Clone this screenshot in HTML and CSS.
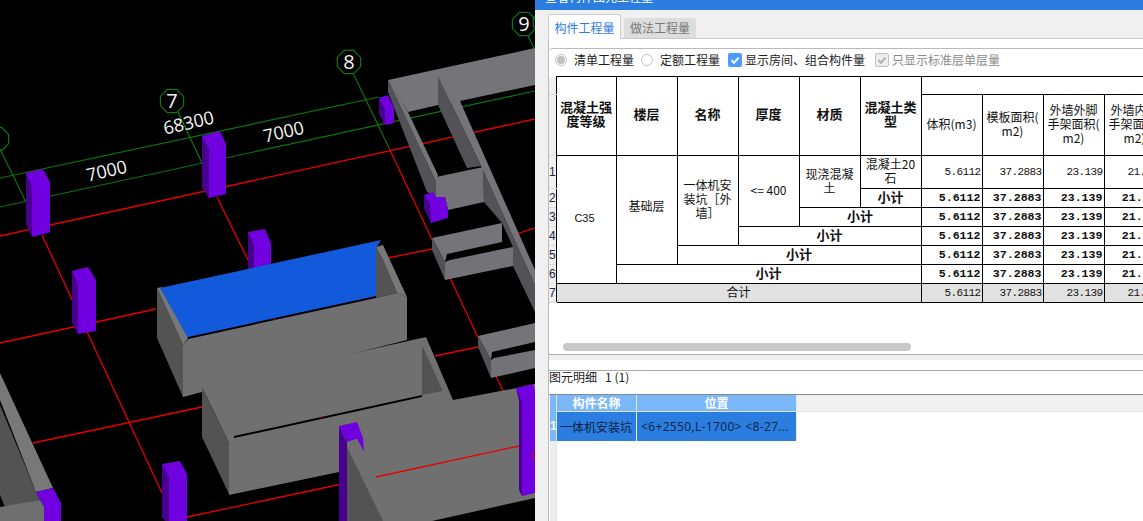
FILE: index.html
```html
<!DOCTYPE html>
<html lang="zh">
<head>
<meta charset="utf-8">
<title>查看构件图元工程量</title>
<link rel="stylesheet" href="styles.css">
</head>
<body>
<div class="app">
  <svg class="scene" viewBox="0 0 535 521" width="535" height="521" xmlns="http://www.w3.org/2000/svg">
    <defs><polygon id="oct" points="-4.6,-11.6 4.6,-11.6 11.6,-4.6 11.6,4.6 4.6,11.6 -4.6,11.6 -11.6,4.6 -11.6,-4.6"/></defs>
    <g class="green">
      <use href="#oct" x="-3" y="139"/><use href="#oct" x="172" y="101"/><use href="#oct" x="349" y="62"/><use href="#oct" x="524" y="24"/><use href="#oct" x="545" y="22"/>
      <line x1="0" y1="149" x2="26" y2="202"/>
      <line x1="178" y1="112" x2="202" y2="163"/>
      <line x1="353" y1="73" x2="390" y2="150"/>
      <line x1="528" y1="36" x2="535" y2="50"/>
      <line x1="0" y1="178" x2="379" y2="97"/>
      <line x1="0" y1="207" x2="535" y2="91"/>
    </g>
    <g class="red">
      <line x1="0" y1="236" x2="535" y2="119"/>
      <line x1="0" y1="343" x2="156" y2="309"/>
      <line x1="33" y1="443" x2="202" y2="407"/>
      <line x1="388" y1="258" x2="432" y2="249"/>
      <line x1="513" y1="235" x2="535" y2="228"/>
      <line x1="435" y1="356" x2="478" y2="347"/>
      <line x1="42" y1="235" x2="162" y2="493"/>
      <line x1="217" y1="197" x2="248" y2="260"/>
      <line x1="390" y1="150" x2="505" y2="395"/>
      <line x1="0" y1="450" x2="3" y2="450"/>
    </g>

    <!-- columns -->
    <polygon class="purple" points="26,173 43,169 50,182 50,232 33,237 26,224"/><polygon class="purple-d" points="26,173 32,187 32,237 26,224"/>
    <polygon class="purple" points="202,136 220,131 226,144 226,194 209,198 202,187"/><polygon class="purple-d" points="202,136 209,149 209,198 202,187"/>
    <polygon class="purple" points="248,232 265,229 271,243 271,275 248,275"/><polygon class="purple-d" points="248,232 254,245 254,275 248,275"/>
    <polygon class="purple" points="72,271 88,267 96,280 96,331 78,334 72,322"/><polygon class="purple-d" points="72,271 78,284 78,334 72,322"/>
    <polygon class="purple" points="379,98 388,95 394,108 394,123 385,125 379,113"/><polygon class="purple-d" points="379,98 385,110 385,125 379,113"/>

    <!-- lower-left wall -->
    <polygon class="dark" points="0,405 36,492 40,500 5,507 0,495"/>
    <polygon class="light" points="0,373 53,488 36,492 0,400"/>
    <polygon class="purple" points="36,492 53,488 61,503 61,521 44,521 44,507 40,500"/>
    <polygon class="face" points="0,507 40,500 44,507 44,521 0,521"/>

    <!-- right structure -->
    <polygon class="dark-c" points="483,170 535,285 535,312 513,266 513,247 502,223 484,202"/>
    <polygon class="light-c" points="388,80 535,48 535,85 460,101 438,105 408,112"/>
    <polygon class="light-c" points="438,76 445,68 460,101 535,270 535,285 483,170 481,166"/>
    <polygon class="dark-c" points="438,76 438,105 467,168 481,166"/>
    <polygon class="dark-c" points="388,80 388,92 427,192 436,197 436,182"/>
    <polygon class="light-c" points="388,80 391,84 408,112 438,175 436,182"/>
    <polygon class="face-c" points="436,177 483,167 484,202 448,210 445,197 436,197"/>
    <polygon class="purple" points="424,195 433,192 436,197 445,197 448,210 448,218 431,223 424,208"/><polygon class="purple-d" points="424,195 430,203 431,223 424,208"/>

    <polygon class="black" points="447,254 502,241 505,247 450,260"/>
    <polygon class="light-c" points="432,238 502,223 502,242 447,254 445,262"/>
    <polygon class="dark-c" points="432,238 432,250 445,280 445,262"/>
    <polygon class="face-c" points="445,262 450,260 513,247 513,266 445,280"/>
    <polygon class="black" points="492,352 535,342 535,349 494,358"/>
    <polygon class="light-c" points="478,336 535,323 535,342 492,352 491,360"/>
    <polygon class="dark-c" points="478,336 478,347 491,378 491,360"/>
    <polygon class="face-c" points="491,360 494,358 535,350 535,368 491,378"/>

    <!-- slab box -->
    <polygon class="dark" points="157,288 183,345 183,397 157,338"/>
    <polygon class="light" points="157,288 162,287 188,338 183,345"/>
    <polygon class="blue" points="160,288 381,240 376,248 376,297 188,338"/>
    <polygon class="black" points="188,337 376,296 376,298 188,339"/>
    <polygon class="dark" points="376,247 383,260 397,293 376,298"/>
    <polygon class="light" points="376,247 383,245 407,297 397,293 383,260"/>
    <polygon class="face" points="183,345 188,339 376,298 397,293 407,297 407,340 202,392 183,397"/>
    <line class="tick" x1="274" y1="318" x2="275" y2="320"/>

    <!-- second box -->
    <polygon class="face" points="202,387 426,337 453,400 453,420 229,500 229,443"/>
    <polygon class="dark" points="202,387 229,443 229,494 202,437"/>
    <polygon class="dark" points="422,345 443,391 422,395"/>
    <polygon class="black" points="234,436 422,395 422,397 234,438"/>
    <line class="tick" x1="320" y1="416" x2="321" y2="418"/>

    <!-- front box -->
    <polygon class="face" points="229,443 453,400 517,388 535,384 535,498 432,521 383,521 339,521 339,480 229,494"/>
    <polygon class="black" points="229,495 339,472 339,521 229,521"/>
    <g class="red"><line x1="187" y1="517" x2="342" y2="484"/></g>
    <polygon class="purple" points="162,464 180,461 187,474 187,521 166,521 162,517"/><polygon class="purple-d" points="162,464 169,477 169,521 166,521 162,517"/>
    <polygon class="purple" points="516,388 533,384 535,390 535,493 522,496 519,490 519,400"/><polygon class="purple-d" points="516,388 522,403 522,496 519,490 519,400"/>
    <polygon class="purple-d" points="339,426 347,442 347,521 339,521"/>
    <polygon class="purple" points="339,426 357,422 363,438 364,452 357,439 347,442"/>
    <polygon class="face" points="347,442 357,439 364,452 383,490 432,521 347,521"/>
    <polygon class="dark" points="347,447 383,521 347,521"/>
    <g class="red">
      <line x1="376" y1="477" x2="519" y2="446"/>
      <line x1="532" y1="452" x2="535" y2="460"/>
    </g>

    <g class="labels">
      <text class="num" x="172" y="108">7</text>
      <text class="num" x="349" y="69">8</text>
      <text class="num" x="524" y="31">9</text>
      <text class="dim" transform="translate(190 129) rotate(-13)" text-anchor="middle">68300</text>
      <text class="dim" transform="translate(108 177) rotate(-13)" text-anchor="middle">7000</text>
      <text class="dim" transform="translate(285 138) rotate(-13)" text-anchor="middle">7000</text>
    </g>
  </svg>

  <section class="panel">
    <header class="titlebar"><div class="title">查看构件图元工程量</div></header>
    <nav class="tabs">
      <div class="tab active">构件工程量</div>
      <div class="tab">做法工程量</div>
    </nav>
    <div class="main">
      <div class="upper">
        <div class="toolbar">
          <span class="radio on"></span><span class="opt">清单工程量</span>
          <span class="radio second"></span><span class="opt">定额工程量</span>
          <span class="check blue"><svg viewBox="0 0 14 14" width="14" height="14"><path d="M3.5 7.2 6 9.7 10.6 4.6" fill="none" stroke="#fff" stroke-width="2"/></svg></span><span class="opt narrow">显示房间、组合构件量</span>
          <span class="check off"><svg viewBox="0 0 14 14" width="14" height="14"><path d="M2.5 6.2 5 8.7 9.6 3.6" fill="none" stroke="#b0b0b0" stroke-width="2"/></svg></span><span class="opt narrow muted">只显示标准层单层量</span>
        </div>
        <div class="table-wrap">
          <table class="qty">
            <colgroup><col class="c-rn"><col class="c-first"><col class="c"><col class="c"><col class="c"><col class="c"><col class="c"><col class="c"><col class="c"><col class="c"><col class="c"></colgroup>
            <thead>
              <tr class="h1">
                <th class="rn"></th>
                <th rowspan="2">混凝土强度等级</th><th rowspan="2">楼层</th><th rowspan="2">名称</th><th rowspan="2">厚度</th><th rowspan="2">材质</th><th rowspan="2">混凝土类型</th>
                <th colspan="4"></th>
              </tr>
              <tr class="h2">
                <th class="rn"></th>
                <td>体积(m3)</td><td>模板面积(<br>m2)</td><td>外墙外脚<br>手架面积(<br>m2)</td><td>外墙内脚<br>手架面积(<br>m2)</td>
              </tr>
            </thead>
            <tbody>
              <tr class="r-first">
                <td class="rn">1</td>
                <td class="c35" rowspan="6">C35</td><td class="floor" rowspan="5">基础层</td><td class="pad-name" rowspan="4">一体机安装坑［外墙］</td><td rowspan="3">&lt;= 400</td><td class="pad-mat" rowspan="2">现浇混凝土</td>
                <td class="tight">混凝土20石</td>
                <td class="n">5.6112</td><td class="n">37.2883</td><td class="n">23.139</td><td class="n">21.596</td>
              </tr>
              <tr><td class="rn">2</td><td class="b">小计</td><td class="n b">5.6112</td><td class="n b">37.2883</td><td class="n b">23.139</td><td class="n b">21.596</td></tr>
              <tr><td class="rn">3</td><td class="b" colspan="2">小计</td><td class="n b">5.6112</td><td class="n b">37.2883</td><td class="n b">23.139</td><td class="n b">21.596</td></tr>
              <tr><td class="rn">4</td><td class="b" colspan="3">小计</td><td class="n b">5.6112</td><td class="n b">37.2883</td><td class="n b">23.139</td><td class="n b">21.596</td></tr>
              <tr><td class="rn">5</td><td class="b" colspan="4">小计</td><td class="n b">5.6112</td><td class="n b">37.2883</td><td class="n b">23.139</td><td class="n b">21.596</td></tr>
              <tr><td class="rn">6</td><td class="b" colspan="5">小计</td><td class="n b">5.6112</td><td class="n b">37.2883</td><td class="n b">23.139</td><td class="n b">21.596</td></tr>
              <tr class="total"><td class="rn">7</td><td colspan="6">合计</td><td class="n">5.6112</td><td class="n">37.2883</td><td class="n">23.139</td><td class="n">21.596</td></tr>
            </tbody>
          </table>
        </div>
        <div class="scrollbar"></div>
      </div>
      <div class="gap"></div>
      <div class="lower">
        <div class="caption">图元明细&nbsp;&nbsp;&nbsp;1 (1)</div>
        <div class="detail">
          <div class="d-rail head"></div>
          <div class="d-head">构件名称</div>
          <div class="d-head">位置</div>
          <div class="d-rest"></div>
          <div class="d-rail sel">1</div>
          <div class="d-cell name">一体机安装坑</div>
          <div class="d-cell">&lt;6+2550,L-1700&gt; &lt;8-27...</div>
          <div class="d-blank"></div>
          <div class="d-rail"></div>
          <div class="d-fill"></div>
        </div>
      </div>
    </div>
  </section>
</div>
</body>
</html>
```
FILE: styles.css
```css
* { box-sizing: border-box; }
html, body { margin: 0; padding: 0; height: 100%; overflow: hidden; background: #000; }
body { font-family: "Noto Sans CJK SC", "Liberation Sans", sans-serif; font-size: 12px; color: #222; }
.app { display: flex; width: 1143px; height: 521px; overflow: hidden; }

.scene { flex: 0 0 535px; display: block; background: #000; }
.green line, .green use { stroke: #0a780a; stroke-width: 1.2; fill: none; }
.red line { stroke: #e60000; stroke-width: 1.3; }
.tick { stroke: #e60000; stroke-width: 1; }
.purple { fill: #7000e0; }
.purple-d { fill: #48008f; }
.face { fill: #707070; }
.dark { fill: #535353; }
.light { fill: #787878; }
.face-c { fill: #737276; }
.light-c { fill: #757478; }
.dark-c { fill: #535256; }
.blue { fill: #1259dc; }
.black { fill: #000; }
.labels text { fill: #f4f4f4; font-family: "Open Sans", sans-serif; }
.num { font-size: 20px; text-anchor: middle; }
.dim { font-size: 18px; }

.panel { flex: 0 0 608px; width: 608px; height: 521px; display: flex; flex-direction: column; background: #f0f0f0; }
.titlebar { flex: 0 0 10px; background: #2c7de0; overflow: hidden; padding-left: 10px; }
.title { margin-top: -9px; line-height: 12px; color: #fff; font-size: 12px; }
.tabs { flex: 0 0 29px; margin-left: 13px; display: flex; align-items: flex-end; gap: 3px; border-bottom: 1px solid #c8c8d0; }
.tab { width: 72px; height: 20px; margin-bottom: 0; background: #ddd; color: #777; text-align: center; line-height: 20px; border-radius: 3px 3px 0 0; }
.tab.active { width: 73px; height: 25px; margin-bottom: -1px; background: #fff; color: #2c7de0; border: 1px solid #ccc; border-bottom: none; line-height: 25px; }

.main { flex: 1; min-height: 0; margin-left: 13px; padding-top: 9px; background: #fff; border-left: 1px solid #bbb; display: flex; flex-direction: column; }
.upper { flex: 0 0 307px; border-top: 1px solid #bbb; border-bottom: 1px solid #aaa; border-top-left-radius: 4px; display: flex; flex-direction: column; }
.toolbar { flex: 0 0 27px; display: flex; align-items: center; padding: 0 0 6px 6px; }
.radio { width: 12px; height: 12px; border-radius: 50%; border: 1px solid #c4c4c4; background: #fff; margin-right: 7px; display: flex; align-items: center; justify-content: center; }
.radio.on::after { content: ""; width: 8px; height: 8px; border-radius: 50%; background: #c0c0c0; }
.radio.second { margin-left: 7px; }
.check { width: 14px; height: 14px; border-radius: 2px; margin-left: 8px; margin-right: 3px; display: block; }
.check svg { display: block; }
.check.blue { background: #4a9cff; }
.check.off { margin-left: 10px; border: 1px solid #c0c0c0; background: #eee; }
.opt { white-space: nowrap; color: #1c1c1c; }
.opt.muted { color: #8a8a8a; }

.table-wrap { flex: 0 0 267px; overflow: hidden; }
.qty { border-collapse: collapse; table-layout: fixed; width: 616px; font-size: 12px; color: #111; }
.c-rn { width: 7px; }
.c-first { width: 60px; }
.c { width: 61px; }
.qty th, .qty td { border: 1px solid #000; padding: 0 0 2px; text-align: center; vertical-align: middle; line-height: 14px; overflow: hidden; font-weight: 400; }
.qty th { font-weight: 700; font-size: 13px; line-height: 14px; padding-bottom: 5px; }
.h1 th { height: 18px; }
.h2 td, .h2 th { height: 61px; }
.qty tbody td { height: 19px; }
.qty .r-first td { height: 33px; }
.qty .rn { border: none; border-bottom: 1px solid #ddd; background: #f0f0f0; font-family: "Liberation Sans", sans-serif; font-size: 12px; font-weight: 400; color: #224; text-align: left; padding: 0; }
.qty .n { font-family: "Liberation Mono", monospace; font-size: 11px; text-align: right; padding: 0 1px 0 0; letter-spacing: -0.6px; }
.qty .n.b { font-size: 11.6px; letter-spacing: 0; }
.qty .b { font-weight: 700; font-size: 13px; }
.qty .floor { padding-bottom: 8px; }
.qty .pad-name { padding: 0 6px 4px; line-height: 14px; }
.qty .pad-mat { padding: 0 5px 1px; line-height: 14px; }
.qty .c35 { font-family: "Liberation Sans", sans-serif; font-size: 11px; padding-right: 3px; padding-bottom: 4px; }
.tight { line-height: 15px; }
.total td { background: #e1e1e1; }

.scrollbar { flex: 0 0 8px; width: 348px; margin-left: 14px; background: #c8c8c8; border-radius: 4px; }

.gap { flex: 0 0 15px; background: linear-gradient(#f0f0f0 0 5px, #fff 5px); }
.lower { flex: 1; min-height: 0; border-top: 1px solid #aaa; display: flex; flex-direction: column; }
.caption { flex: 0 0 23px; line-height: 12px; white-space: nowrap; color: #1c1c1c; }
.detail { flex: 1; min-height: 0; border-top: 1px solid #888; display: grid; grid-template-columns: 8px 80px 160px 1fr; grid-template-rows: 17px 29px 1fr; padding-left: 0; }
.d-rail { background: #eee; border-left: 1px solid #fff; border-right: 1px solid #e4e4e4; }
.d-rail.head, .d-rail.sel { background: #7ab8fa; }
.d-rail.sel { color: #fff; font-family: "Liberation Sans", sans-serif; font-weight: 700; line-height: 29px; font-size: 12px; text-align: center; }
.d-head { background: #7ab8fa; color: #fff; font-weight: 700; font-size: 12px; line-height: 16px; text-align: center; border-right: 1px solid #d8e8f8; border-bottom: 1px solid #e4e4e4; }
.d-rest { background: #f0f0f0; border-bottom: 1px solid #e4e4e4; }
.d-cell { background: #2b7de0; color: #0a2340; line-height: 29px; white-space: nowrap; border-right: 1px solid #e4eef8; padding-left: 4px; letter-spacing: 0.35px; font-family: "Open Sans", "Noto Sans CJK SC", sans-serif; }
.d-cell.name { padding-left: 3px; letter-spacing: 0; font-family: "Noto Sans CJK SC", sans-serif; }
.d-blank, .d-fill { background: #fff; }
.d-fill { grid-column: 2 / -1; }
```
